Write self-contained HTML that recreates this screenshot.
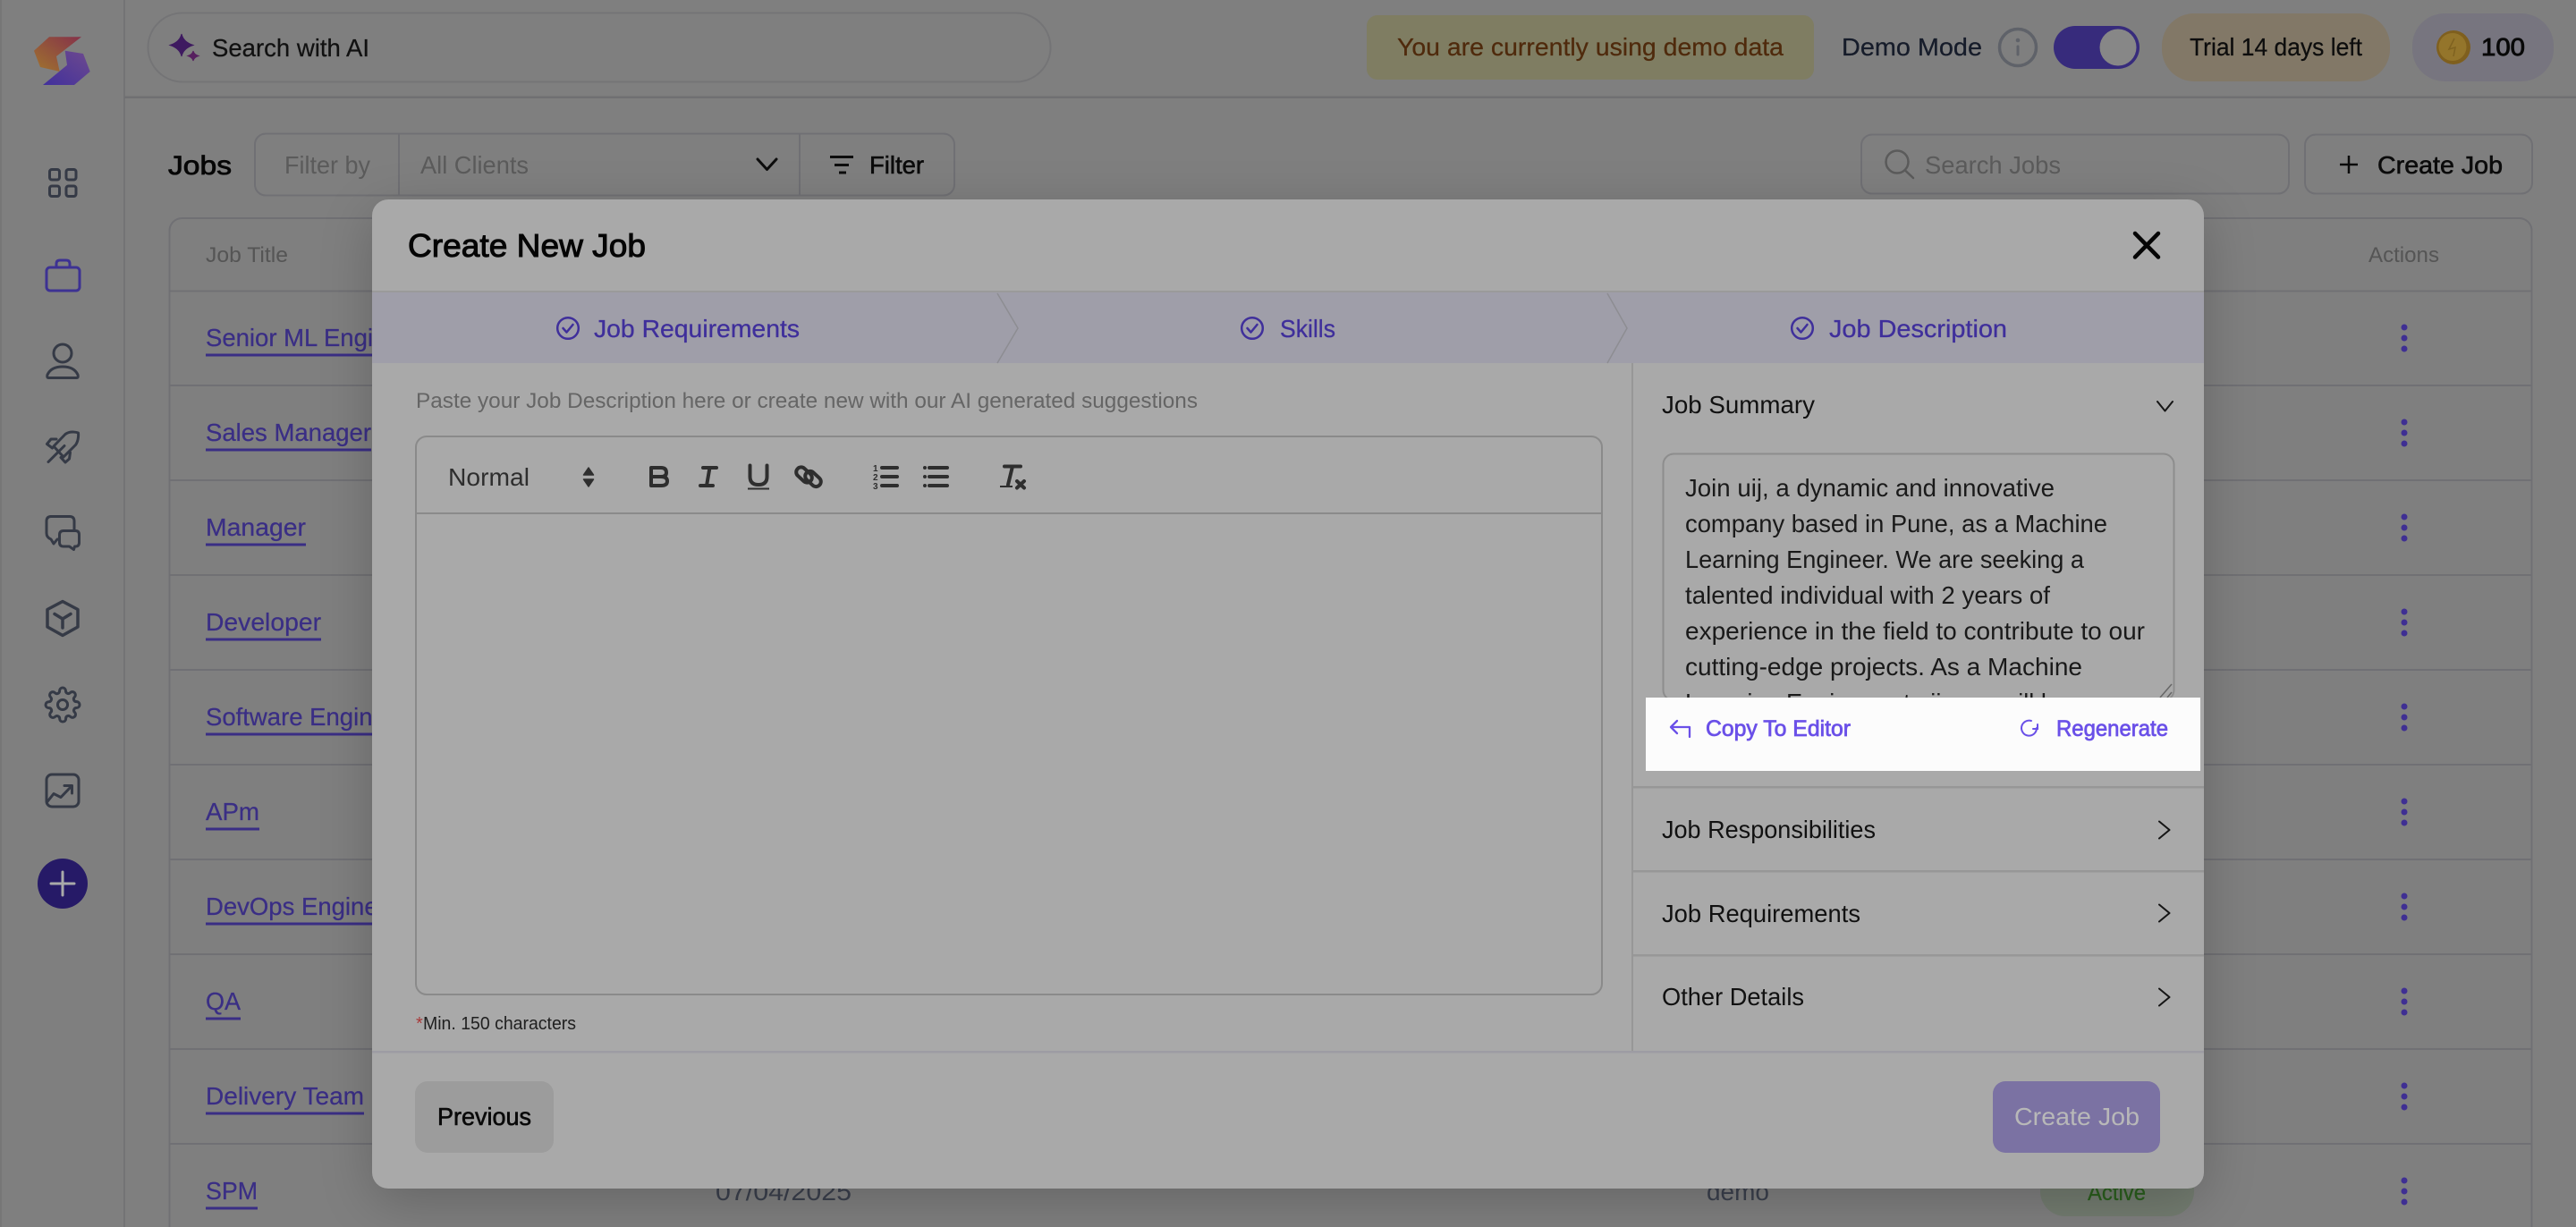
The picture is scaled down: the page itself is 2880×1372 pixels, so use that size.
<!DOCTYPE html>
<html lang="en"><head><meta charset="utf-8"><title>Create New Job</title>
<style>
html,body{margin:0;padding:0;background:#7f7f7f;width:2880px;height:1372px;overflow:hidden}
svg{display:block}
text{font-family:"Liberation Sans",sans-serif;font-size:27.5px;white-space:pre}
.m{stroke-width:.6px}
.t{stroke-width:.25px}
.lnk{fill:#3a2e85;stroke:#3a2e85;stroke-width:.25px}
.ln{fill:none;stroke:#3a2e85;stroke-width:3}
.ic{fill:none;stroke:#353a46;stroke-width:3;stroke-linecap:round;stroke-linejoin:round}
.bd{fill:none;stroke:#707074;stroke-width:2}
.dv{fill:none;stroke:#959595;stroke-width:2}
.tb{fill:none;stroke:#2e2e2e;stroke-width:4;stroke-linecap:round;stroke-linejoin:round}
.st{fill:none;stroke:#3f2f9b;stroke-width:2.5;stroke-linecap:round;stroke-linejoin:round}
.ch{fill:none;stroke:#151515;stroke-width:2;stroke-linecap:round;stroke-linejoin:round}
.stx{fill:#3f2f9b;stroke:#3f2f9b;stroke-width:.3px}
.d{fill:#111}
.kb{fill:#3f2f93}
.cp{fill:#6a50e8;stroke:#6a50e8;stroke-width:.75px;font-size:25px}
.ta{fill:#1a1a1a;font-size:27.5px}
</style></head>
<body>
<svg xmlns="http://www.w3.org/2000/svg" width="2880" height="1372" viewBox="0 0 2880 1372">
<defs>
<linearGradient id="lo" x1="0" y1="1" x2="1" y2="0"><stop offset="0" stop-color="#a0742e"/><stop offset="1" stop-color="#85324a"/></linearGradient>
<linearGradient id="lp" x1="0" y1="1" x2="1" y2="0"><stop offset="0" stop-color="#41309c"/><stop offset="1" stop-color="#6e4a8e"/></linearGradient>
<filter id="sh" x="-10%" y="-10%" width="120%" height="125%"><feGaussianBlur stdDeviation="30"/></filter>
<clipPath id="tc"><rect x="1861" y="509" width="568" height="271"/></clipPath>
</defs>
<rect width="2880" height="1372" fill="#7f7f7f"/>

<!-- sidebar -->
<rect x="0" y="0" width="2" height="1372" fill="#767676"/>
<rect x="138" y="0" width="2" height="1372" fill="#737375"/>
<rect x="139" y="107.500" width="2741" height="2.500" fill="#707072"/>
<path d="M91 41.300H55L38 56.700L45 75L66.700 80L63 63Z" fill="url(#lo)"/>
<path d="M48 95H83L100.700 80L93 60L72.700 56.700L75 72.700Z" fill="url(#lp)"/>
<g class="ic">
<rect x="55.500" y="189.500" width="11" height="11.500" rx="2.500"/><rect x="74" y="189.500" width="11" height="11.500" rx="2.500"/>
<rect x="55.500" y="208" width="11" height="11.500" rx="2.500"/><rect x="74" y="208" width="11" height="11.500" rx="2.500"/>
<circle cx="70" cy="395" r="10"/>
<path d="M54.500 422.500H85.500Q88 422.500 87 419C84 412.500 78 410 70 410C62 410 56 412.500 53 419Q52 422.500 54.500 422.500Z"/>
<path d="M87.500 484C87.500 484 79 481 73 485.500L60 499L71 511L84.500 497.500C88.500 492 87.500 484 87.500 484Z"/>
<path d="M63 491L57 491L52.500 496.500L58.500 501"/><path d="M78.500 506L77.500 513L73 517L68 511.500"/><path d="M54 516.500L72 498.500"/>
<path d="M57 577.500H78Q83 577.500 83 583V593"/><path d="M66 603H64L60 608L57 603Q52 601 52 596V583Q52 577.500 57 577.500"/>
<path d="M71 593.500H84.500Q88.500 593.500 88.500 598V606.500Q88.500 611 84.500 611H83.500L82.500 614.500L77.500 611H71Q66.500 611 66.500 606.500V598Q66.500 593.500 71 593.500Z"/>
<path style="stroke-width:3.500" d="M70 672.500L87 681.500V701L70 710.500L53 701V681.500Z"/><path style="stroke-width:3.500" d="M61 686.500L70 692L79 686.500M70 692V702"/>
<g transform="translate(49.300 767.300) scale(1.727)" style="stroke-width:1.750"><circle cx="12" cy="12" r="3.200"/><path d="M19.400 15a1.650 1.650 0 0 0 .33 1.820l.06.06a2 2 0 0 1 0 2.830 2 2 0 0 1-2.830 0l-.06-.06a1.650 1.650 0 0 0-1.820-.33 1.650 1.650 0 0 0-1 1.510V21a2 2 0 0 1-2 2 2 2 0 0 1-2-2v-.09A1.650 1.650 0 0 0 9 19.400a1.650 1.650 0 0 0-1.820.33l-.06.06a2 2 0 0 1-2.830 0 2 2 0 0 1 0-2.830l.06-.06a1.650 1.650 0 0 0 .33-1.820 1.650 1.650 0 0 0-1.510-1H3a2 2 0 0 1-2-2 2 2 0 0 1 2-2h.09A1.650 1.650 0 0 0 4.600 9a1.650 1.650 0 0 0-.33-1.820l-.06-.06a2 2 0 0 1 0-2.830 2 2 0 0 1 2.830 0l.06.06a1.650 1.650 0 0 0 1.820.33H9a1.650 1.650 0 0 0 1-1.510V3a2 2 0 0 1 2-2 2 2 0 0 1 2 2v.09a1.650 1.650 0 0 0 1 1.510 1.650 1.650 0 0 0 1.820-.33l.06-.06a2 2 0 0 1 2.830 0 2 2 0 0 1 0 2.830l-.06.06a1.650 1.650 0 0 0-.33 1.820V9a1.650 1.650 0 0 0 1.510 1H21a2 2 0 0 1 2 2 2 2 0 0 1-2 2h-.09a1.650 1.650 0 0 0-1.510 1z"/></g>
<rect x="52" y="866" width="36" height="36" rx="6"/><path d="M52.500 897L60 887.500L68 891.500L80 879"/><path d="M72 878.500H80.500V887"/>
</g>
<g fill="none" stroke="#3d3293" stroke-width="3" stroke-linejoin="round"><rect x="52" y="299" width="37" height="26" rx="4"/><path d="M63 299V295Q63 291 67 291H74Q78 291 78 295V299"/></g>
<circle cx="70" cy="988" r="28" fill="#261a67"/>
<path d="M57 988H83M70 975V1001" stroke="#a9a9a9" stroke-width="3" stroke-linecap="round"/>

<!-- top bar -->
<rect x="165.500" y="14.500" width="1009" height="77" rx="38.500" fill="none" stroke="#747476" stroke-width="2"/>
<path d="M203 38Q205 47 216 50.500Q205 54 203 63Q201 54 190 50.500Q201 47 203 38Z" fill="#3e1a60" stroke="#3e1a60" stroke-width="1"/>
<path d="M216 57Q217 61 222 62.500Q217 64 216 68Q215 64 210 62.500Q215 61 216 57Z" fill="#57205f" stroke="#57205f"/>
<text x="237" y="63" textLength="176" lengthAdjust="spacingAndGlyphs" fill="#111" stroke="#111" class="t">Search with AI</text>

<rect x="1528" y="17" width="500" height="72" rx="12" fill="#7f7d62"/>
<text x="1562" y="62" textLength="432" lengthAdjust="spacingAndGlyphs" fill="#4f2a0c" stroke="#4f2a0c" class="t">You are currently using demo data</text>
<text x="2059" y="62" textLength="157" lengthAdjust="spacingAndGlyphs" fill="#161c2a" stroke="#161c2a" class="t">Demo Mode</text>
<circle cx="2256" cy="53" r="20.500" fill="none" stroke="#5f6269" stroke-width="3.500"/>
<circle cx="2256" cy="45" r="2.300" fill="#5f6269"/><rect x="2254.500" y="50.500" width="3" height="12" rx="1.500" fill="#5f6269"/>
<rect x="2296" y="29" width="96" height="48" rx="24" fill="#372b7c"/>
<circle cx="2368" cy="53" r="20.500" fill="#878787"/>
<rect x="2417" y="15" width="255" height="76" rx="36" fill="#827867"/>
<text x="2448" y="62" textLength="193" lengthAdjust="spacingAndGlyphs" fill="#0d0d0d" stroke="#0d0d0d" class="t">Trial 14 days left</text>
<rect x="2697" y="15" width="158" height="76" rx="36" fill="#77757f"/>
<circle cx="2743" cy="53" r="19" fill="#7f5f1e"/><circle cx="2742" cy="52.500" r="15.500" fill="#94752b"/><path d="M2744 43L2738 55L2745 53L2743 63" fill="none" stroke="#7f6220" stroke-width="1.500"/>
<text x="2774" y="62" textLength="49" lengthAdjust="spacingAndGlyphs" fill="#080808" stroke="#080808" stroke-width=".9" style="font-size:28px">100</text>

<!-- toolbar -->
<text x="188" y="195" textLength="71" lengthAdjust="spacingAndGlyphs" fill="#060606" stroke="#060606" stroke-width=".8" style="font-size:30px">Jobs</text>
<rect x="285" y="149.500" width="782" height="69" rx="12" class="bd"/>
<path d="M446 150V218M894 150V218" class="bd"/>
<text x="318" y="194" textLength="96" lengthAdjust="spacingAndGlyphs" fill="#5b5b5b">Filter by</text>
<text x="470" y="194" textLength="121" lengthAdjust="spacingAndGlyphs" fill="#5b5b5b">All Clients</text>
<path d="M847 178L857.500 189.500L868 178" fill="none" stroke="#0d0d0d" stroke-width="3" stroke-linecap="round" stroke-linejoin="round"/>
<path d="M928 175.500H954M933 184.500H949M938 193H946" stroke="#0d0d0d" stroke-width="3" fill="none"/>
<text x="972" y="194" textLength="61" lengthAdjust="spacingAndGlyphs" fill="#0b0b0b" stroke="#0b0b0b" class="m">Filter</text>
<rect x="2081" y="150.500" width="478" height="66" rx="12" class="bd"/>
<circle cx="2121" cy="181" r="12.500" fill="none" stroke="#5b5b5b" stroke-width="2.500"/>
<path d="M2130 190.500L2139 199" stroke="#5b5b5b" stroke-width="2.500" stroke-linecap="round"/>
<text x="2152" y="194" textLength="152" lengthAdjust="spacingAndGlyphs" fill="#5b5b5b">Search Jobs</text>
<rect x="2577" y="150.500" width="254" height="66" rx="12" class="bd"/>
<path d="M2616 184H2636M2626 174V194" stroke="#0b0b0b" stroke-width="2.500" fill="none"/>
<text x="2658" y="194" textLength="140" lengthAdjust="spacingAndGlyphs" fill="#0b0b0b" stroke="#0b0b0b" class="m">Create Job</text>

<!-- table -->
<rect x="189.500" y="244" width="2641" height="1180" rx="14" class="bd"/>
<g class="bd">
<path d="M190 325.500H2831M190 431H2831M190 537H2831M190 643H2831M190 749H2831M190 855H2831M190 961H2831M190 1067H2831M190 1173H2831M190 1279H2831"/>
</g>
<text x="230" y="293" textLength="92" lengthAdjust="spacingAndGlyphs" fill="#555" style="font-size:24px">Job Title</text>
<text x="2648" y="293" textLength="79" lengthAdjust="spacingAndGlyphs" fill="#555" style="font-size:24px">Actions</text>
<g class="lnk">
<text x="230" y="387">Senior ML Engineer</text>
<text x="230" y="493" textLength="185" lengthAdjust="spacingAndGlyphs">Sales Manager</text>
<text x="230" y="599" textLength="112" lengthAdjust="spacingAndGlyphs">Manager</text>
<text x="230" y="705" textLength="129" lengthAdjust="spacingAndGlyphs">Developer</text>
<text x="230" y="811">Software Engineer</text>
<text x="230" y="917" textLength="60" lengthAdjust="spacingAndGlyphs">APm</text>
<text x="230" y="1023">DevOps Engineer</text>
<text x="230" y="1129" textLength="39" lengthAdjust="spacingAndGlyphs">QA</text>
<text x="230" y="1235" textLength="177" lengthAdjust="spacingAndGlyphs">Delivery Team</text>
<text x="230" y="1341" textLength="58" lengthAdjust="spacingAndGlyphs">SPM</text>
</g>
<path class="ln" d="M230 397H430M230 503H415M230 609H342M230 715H359M230 821H430M230 927H290M230 1033H430M230 1139H269M230 1245H407M230 1351H288"/>
<text x="800" y="1342" textLength="152" lengthAdjust="spacingAndGlyphs" fill="#3b404d">07/04/2025</text>
<text x="1908" y="1342" textLength="70" lengthAdjust="spacingAndGlyphs" fill="#3b404d">demo</text>
<rect x="2281" y="1300" width="172" height="60" rx="28" fill="#737c70"/>
<text x="2334" y="1342" textLength="65" lengthAdjust="spacingAndGlyphs" fill="#2a5f1d" stroke="#2a5f1d" class="t" style="font-size:25px">Active</text>
<g class="kb">
<circle cx="2688" cy="366" r="3.500"/><circle cx="2688" cy="378" r="3.500"/><circle cx="2688" cy="390" r="3.500"/>
<circle cx="2688" cy="472" r="3.500"/><circle cx="2688" cy="484" r="3.500"/><circle cx="2688" cy="496" r="3.500"/>
<circle cx="2688" cy="578" r="3.500"/><circle cx="2688" cy="590" r="3.500"/><circle cx="2688" cy="602" r="3.500"/>
<circle cx="2688" cy="684" r="3.500"/><circle cx="2688" cy="696" r="3.500"/><circle cx="2688" cy="708" r="3.500"/>
<circle cx="2688" cy="790" r="3.500"/><circle cx="2688" cy="802" r="3.500"/><circle cx="2688" cy="814" r="3.500"/>
<circle cx="2688" cy="896" r="3.500"/><circle cx="2688" cy="908" r="3.500"/><circle cx="2688" cy="920" r="3.500"/>
<circle cx="2688" cy="1002" r="3.500"/><circle cx="2688" cy="1014" r="3.500"/><circle cx="2688" cy="1026" r="3.500"/>
<circle cx="2688" cy="1108" r="3.500"/><circle cx="2688" cy="1120" r="3.500"/><circle cx="2688" cy="1132" r="3.500"/>
<circle cx="2688" cy="1214" r="3.500"/><circle cx="2688" cy="1226" r="3.500"/><circle cx="2688" cy="1238" r="3.500"/>
<circle cx="2688" cy="1320" r="3.500"/><circle cx="2688" cy="1332" r="3.500"/><circle cx="2688" cy="1344" r="3.500"/>
</g>

<!-- modal -->
<rect x="416" y="238" width="2048" height="1106" rx="20" fill="#000" opacity=".2" filter="url(#sh)"/>
<rect x="416" y="223" width="2048" height="1106" rx="18" fill="#a9a9a9"/>
<text x="456" y="287" textLength="266" lengthAdjust="spacingAndGlyphs" fill="#050505" stroke="#050505" stroke-width="1" style="font-size:36px">Create New Job</text>
<path d="M2387 261L2413 287.500M2413 261L2387 287.500" stroke="#050505" stroke-width="4.500" stroke-linecap="round"/>
<rect x="416" y="325" width="2048" height="2.500" fill="#9a9a9a"/>
<rect x="416" y="327" width="2048" height="79" fill="#9f9ea9"/>
<path d="M1115 328L1138 367L1115 406M1797 328L1819 367L1797 406" fill="none" stroke="#8d8d92" stroke-width="1.500"/>
<g class="st">
<circle cx="635" cy="367" r="11.800"/><path d="M629.500 367L633.500 371.500L640.500 363"/>
<circle cx="1400" cy="367" r="11.800"/><path d="M1394.500 367L1398.500 371.500L1405.500 363"/>
<circle cx="2015" cy="367" r="11.800"/><path d="M2009.500 367L2013.500 371.500L2020.500 363"/>
</g>
<text class="stx" x="664" y="377" textLength="230" lengthAdjust="spacingAndGlyphs">Job Requirements</text>
<text class="stx" x="1431" y="377" textLength="62" lengthAdjust="spacingAndGlyphs">Skills</text>
<text class="stx" x="2045" y="377" textLength="199" lengthAdjust="spacingAndGlyphs">Job Description</text>

<text x="465" y="456" textLength="874" lengthAdjust="spacingAndGlyphs" fill="#656565" style="font-size:24px">Paste your Job Description here or create new with our AI generated suggestions</text>
<rect x="465" y="488" width="1326" height="624" rx="12" fill="none" stroke="#8a8a8a" stroke-width="2"/>
<rect x="465" y="573" width="1326" height="2" fill="#8a8a8a"/>
<text x="501" y="543" textLength="91" lengthAdjust="spacingAndGlyphs" fill="#2e2e2e">Normal</text>
<path d="M658 523L663.500 531H652.500ZM658 544L663.500 536H652.500Z" fill="#2e2e2e" stroke="#2e2e2e" stroke-width="1.500" stroke-linejoin="round"/>
<g class="tb">
<path d="M728 523H739Q745 523 745 528.500Q745 533 739 533H728M739 533Q746 533 746 538Q746 543 739 543H728V523"/>
<path d="M786 523H801M783 543H797M793.500 523L790 543"/>
<path d="M838.500 520.500V533Q838.500 542 848 542Q857.500 542 857.500 533V520.500"/>
<rect x="889" y="525.500" width="20" height="11" rx="5.500" transform="rotate(43 899 531)"/>
<rect x="899" y="530" width="20" height="11" rx="5.500" transform="rotate(43 909 535.500)"/>
<path d="M986 523H1003M986 533H1003M986 543H1003"/>
<path d="M1039 523H1059M1039 533H1059M1039 543H1059"/>
<path d="M1123 521.500H1141M1132 521.500L1127 542"/>
<path d="M1137 538L1145 545.500M1145 538L1137 545.500"/>
</g>
<path d="M836 546.500H860M1118 544H1132" stroke="#2e2e2e" stroke-width="2"/>
<g fill="#2e2e2e"><text x="976" y="527" style="font-size:10px;font-weight:700">1</text><text x="976" y="537" style="font-size:10px;font-weight:700">2</text><text x="976" y="547" style="font-size:10px;font-weight:700">3</text></g>
<circle cx="1034" cy="523" r="2" fill="#2e2e2e"/><circle cx="1034" cy="533" r="2" fill="#2e2e2e"/><circle cx="1034" cy="543" r="2" fill="#2e2e2e"/>
<text x="465" y="1151" fill="#a83a3a" style="font-size:20px">*</text>
<text x="473" y="1151" textLength="171" lengthAdjust="spacingAndGlyphs" fill="#202020" style="font-size:20px">Min. 150 characters</text>

<!-- right panel -->
<rect x="1824" y="406" width="2" height="770" fill="#979797"/>
<text class="d" x="1858" y="462" textLength="171" lengthAdjust="spacingAndGlyphs">Job Summary</text>
<path class="ch" d="M2412 449L2420.500 459.500L2429 449"/>
<rect x="1859.500" y="507.500" width="571" height="276" rx="12" fill="none" stroke="#8d8d8d" stroke-width="2"/>
<g class="ta" clip-path="url(#tc)">
<text class="ta" x="1884" y="555" textLength="413" lengthAdjust="spacingAndGlyphs">Join uij, a dynamic and innovative</text>
<text class="ta" x="1884" y="595" textLength="472" lengthAdjust="spacingAndGlyphs">company based in Pune, as a Machine</text>
<text class="ta" x="1884" y="635" textLength="446" lengthAdjust="spacingAndGlyphs">Learning Engineer. We are seeking a</text>
<text class="ta" x="1884" y="675" textLength="408" lengthAdjust="spacingAndGlyphs">talented individual with 2 years of</text>
<text class="ta" x="1884" y="715" textLength="514" lengthAdjust="spacingAndGlyphs">experience in the field to contribute to our</text>
<text class="ta" x="1884" y="755" textLength="444" lengthAdjust="spacingAndGlyphs">cutting-edge projects. As a Machine</text>
<text class="ta" x="1884" y="795" textLength="428" lengthAdjust="spacingAndGlyphs">Learning Engineer at uij, you will be</text>
</g>
<path d="M2415 780L2428 765M2423 780L2428 774" stroke="#666" stroke-width="1.500" fill="none"/>
<rect x="1840" y="780" width="620" height="82" fill="#fcfcfc"/>
<path d="M1875 806L1868 813L1875 820M1868 813H1889V824" fill="none" stroke="#6a50e8" stroke-width="2.300" stroke-linejoin="round" stroke-linecap="round"/>
<text class="cp" x="1907" y="823" textLength="162" lengthAdjust="spacingAndGlyphs">Copy To Editor</text>
<path d="M2277 814A8.500 8.500 0 1 1 2271 806M2278 810V815H2273" fill="none" stroke="#6a50e8" stroke-width="2" stroke-linecap="round"/>
<text class="cp" x="2299" y="823" textLength="125" lengthAdjust="spacingAndGlyphs">Regenerate</text>
<rect x="1825" y="879" width="639" height="2.500" fill="#979797"/>
<text class="d" x="1858" y="937" textLength="239" lengthAdjust="spacingAndGlyphs">Job Responsibilities</text>
<path class="ch" d="M2414 918.500L2425.500 928L2414 937.500"/>
<rect x="1825" y="973" width="639" height="2.500" fill="#979797"/>
<text class="d" x="1858" y="1031" textLength="222" lengthAdjust="spacingAndGlyphs">Job Requirements</text>
<path class="ch" d="M2414 1011.500L2425.500 1021L2414 1030.500"/>
<rect x="1825" y="1067" width="639" height="2.500" fill="#979797"/>
<text class="d" x="1858" y="1124" textLength="159" lengthAdjust="spacingAndGlyphs">Other Details</text>
<path class="ch" d="M2414 1105.500L2425.500 1115L2414 1124.500"/>

<!-- footer -->
<rect x="416" y="1175" width="2048" height="2.500" fill="#9d9ca3"/>
<rect x="464" y="1209" width="155" height="80" rx="14" fill="#9c9c9c"/>
<text x="489" y="1258" textLength="105" lengthAdjust="spacingAndGlyphs" fill="#0a0a0a" stroke="#0a0a0a" class="m">Previous</text>
<rect x="2228" y="1209" width="187" height="80" rx="14" fill="#7b72a3"/>
<text x="2252" y="1258" textLength="140" lengthAdjust="spacingAndGlyphs" fill="#b8b8b8">Create Job</text>
</svg>
</body></html>
